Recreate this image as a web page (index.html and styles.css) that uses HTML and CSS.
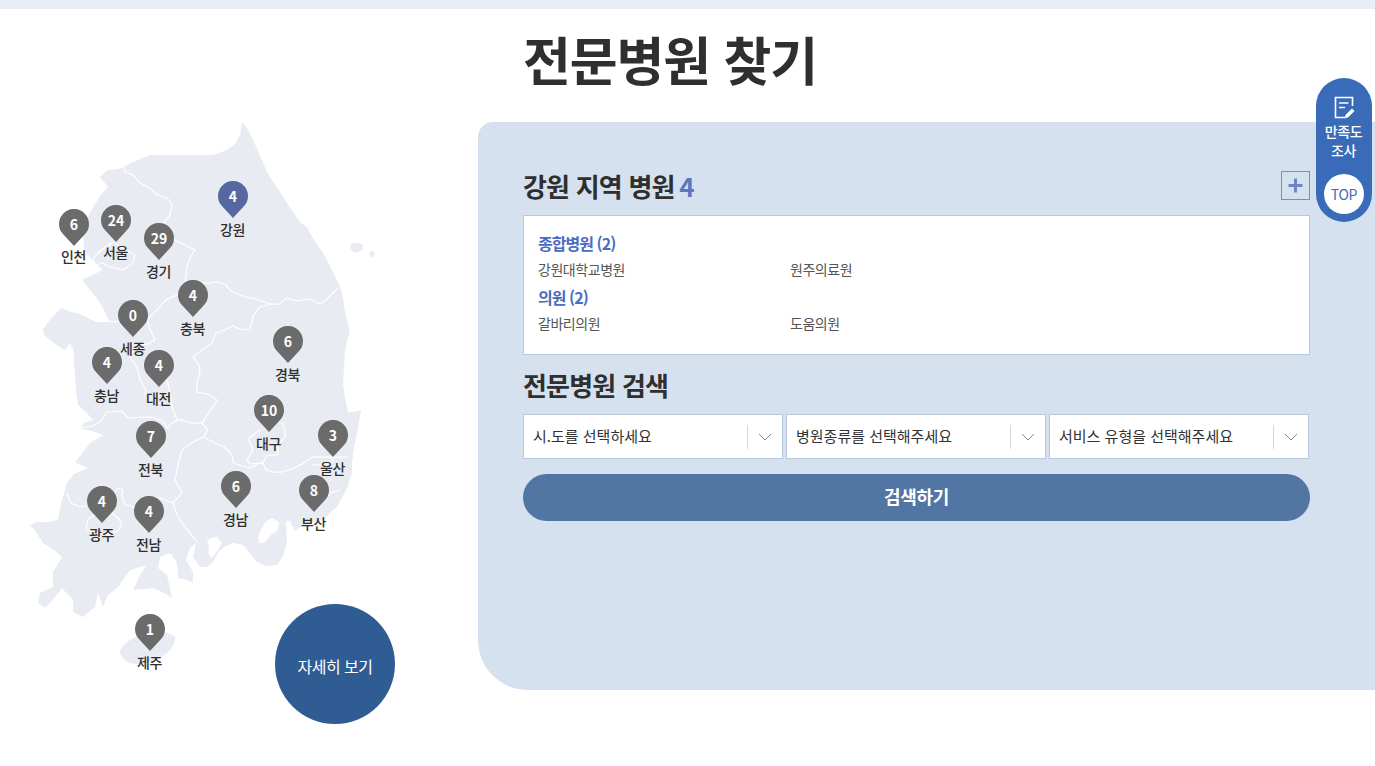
FILE: index.html
```html
<!DOCTYPE html>
<html lang="ko">
<head>
<meta charset="utf-8">
<title>전문병원 찾기</title>
<link rel="stylesheet" href="styles.css">
</head>
<body>
<div class="topbar"></div>
<header class="page-head"><h1 class="page-title">전문병원 찾기</h1></header>
<main class="content">
  <section class="map">
    <svg class="map-art" width="478" height="644" viewBox="0 122 478 644" aria-hidden="true">
      <path class="land" d="M242 122 L247 128 L253 140 L258 151 L262 160 L267 172 L276 186 L285 200 L293 212 L300 222 L307 227 L310 233 L316 243 L323 253 L330 266 L337 280 L340 287 L343 297 L345 312 L350 333 L347 340 L345 352 L344 368 L343 383 L345 398 L348 412 L354 412 L361 410 L358 428 L354 448 L352 462 L352 473 L347 488 L337 507 L331 512 L323 520 L312 522 L302 526 L295 531 L290 521 L286 521 L287 543 L283 556 L277 565 L266 566 L257 562 L250 553 L243 545 L233 543 L226 546 L220 550 L212 563 L207 567 L200 567 L193 557 L196 543 L190 548 L186 560 L193 572 L193 583 L188 580 L178 578 L177 563 L170 553 L160 557 L158 568 L167 575 L172 598 L164 593 L153 588 L133 590 L140 575 L147 565 L130 570 L118 587 L108 595 L103 607 L98 593 L95 607 L83 617 L73 612 L73 600 L62 588 L50 603 L45 608 L38 603 L40 593 L53 587 L53 572 L62 557 L54 550 L43 543 L36 532 L30 525 L37 522 L48 522 L58 520 L61 504 L67 483 L74 474 L88 468 L80 465 L75 462 L80 456 L90 443 L103 435 L95 432 L80 428 L84 423 L93 420 L86 412 L78 405 L76 390 L75 373 L73 352 L70 343 L65 350 L56 345 L44 335 L43 329 L50 320 L61 308 L68 311 L80 314 L96 322 L110 322 L104 310 L98 300 L90 290 L82 280 L90 276 L103 270 L94 262 L84 250 L83 227 L88 217 L93 207 L100 196 L108 187 L104 182 L100 177 L108 170 L118 169 L125 166 L138 160 L150 155 L170 155 L190 155 L213 155 L227 150 L235 144 L240 135 Z"/>
      <path class="land" d="M350 246 C352 242 360 242 363 245 C364 250 358 254 354 252 C351 251 350 248 350 246 Z"/>
      <ellipse class="land" cx="372" cy="254" rx="2.6" ry="3"/>
      <path class="land" d="M120 651 C122 643 133 638 143 634 C155 632 170 631 175 637 C176 645 168 654 158 659 C148 664 134 666 126 661 C122 658 120 655 120 651 Z"/>
      <path class="sea" d="M70 348 C73 345 74 351 74 358 C74 366 75 373 73 376 C71 370 69 358 70 348 Z"/>
      <path class="sea" d="M272 518 L266 521 L262 528 L258 537 L259 543 L264 543 L272 534 L278 530 L279 522 Z"/>
      <path class="sea" d="M207 541 L211 538 L217 537 L222 543 L218 550 L212 558 L208 553 L209 546 Z"/>
      <g class="borders">
        <path d="M123 165 L125 172 L133 175 L140 183 L150 188 L157 195 L168 199 L172 205 L170 215 L163 223 L168 233 L175 240 L185 245 L195 250 L190 258 L187 267 L185 283 L196 282 L203 283 L210 283 L217 282 L225 284 L231 291 L238 294 L245 297 L256 299 L270 304 L279 304 L287 298 L296 301 L310 299 L319 304 L325 301 L338 288"/>
        <path d="M185 283 L177 295 L167 299 L157 310 L147 320 L132 320 L110 322"/>
        <path d="M270 304 L260 307 L253 316 L250 330 L240 329 L233 326 L222 331 L216 333 L212 343 L205 348 L193 357 L199 365 L200 373 L197 382 L197 392 L208 394 L217 400 L211 409 L204 420 L202 423 L208 430 L203 437"/>
        <path d="M147 320 L149 327 L155 340 L148 344 L137 345 L130 357 L138 370 L140 380 L146 390 L145 395"/>
        <path d="M167 380 L170 393 L173 410 L177 420 L182 420 L192 423 L202 423"/>
        <path d="M177 420 L172 423 L167 428 L163 421 L152 417 L143 417 L128 418 L122 411 L107 412 L101 421 L93 426 L80 428"/>
        <path d="M203 437 L193 442 L182 450 L178 465 L175 480 L182 493 L173 503 L178 517 L186 528 L197 542"/>
        <path d="M173 503 L160 498 L150 497 L133 507 L124 503 L122 494 L123 490 L118 488 L113 495 L108 505 L92 505 L80 507 L71 503 L67 494"/>
        <path d="M112 513 L122 522 L119 530 L108 535 L91 531 L86 530 L88 519 L95 515"/>
        <path d="M203 437 L215 443 L224 447 L232 455 L233 463 L243 466 L250 468 L258 464 L263 463 L266 470 L273 472 L282 472 L292 469 L302 464 L313 457 L321 457 L330 457 L347 457"/>
        <path d="M313 465 L330 464 L335 456"/>
        <path d="M282 423 L285 431 L285 437 L278 445 L278 455 L267 455 L263 463"/>
        <path d="M263 463 L250 464 L247 460 L253 450 L249 441 L250 437 L260 430"/>
        <path d="M98 252 L113 242 L120 247 L135 255 L133 263 L123 270 L110 267 L103 263 L95 265 L93 258 L100 252"/>
        <path d="M327 496 L333 492 L340 490"/>
      </g>
    </svg>

    <div class="pin pin-incheon"><span class="pin-mark"><svg class="pin-shape" width="30" height="37" viewBox="0 0 30 37"><path d="M15 37 L4.4 25.6 A15 15 0 1 1 25.6 25.6 Z"/></svg><b class="pin-num">6</b></span><span class="pin-name">인천</span></div>
    <div class="pin pin-seoul"><span class="pin-mark"><svg class="pin-shape" width="30" height="37" viewBox="0 0 30 37"><path d="M15 37 L4.4 25.6 A15 15 0 1 1 25.6 25.6 Z"/></svg><b class="pin-num">24</b></span><span class="pin-name">서울</span></div>
    <div class="pin pin-gyeonggi"><span class="pin-mark"><svg class="pin-shape" width="30" height="37" viewBox="0 0 30 37"><path d="M15 37 L4.4 25.6 A15 15 0 1 1 25.6 25.6 Z"/></svg><b class="pin-num">29</b></span><span class="pin-name">경기</span></div>
    <div class="pin pin-gangwon is-active"><span class="pin-mark"><svg class="pin-shape" width="30" height="37" viewBox="0 0 30 37"><path d="M15 37 L4.4 25.6 A15 15 0 1 1 25.6 25.6 Z"/></svg><b class="pin-num">4</b></span><span class="pin-name">강원</span></div>
    <div class="pin pin-chungbuk"><span class="pin-mark"><svg class="pin-shape" width="30" height="37" viewBox="0 0 30 37"><path d="M15 37 L4.4 25.6 A15 15 0 1 1 25.6 25.6 Z"/></svg><b class="pin-num">4</b></span><span class="pin-name">충북</span></div>
    <div class="pin pin-sejong"><span class="pin-mark"><svg class="pin-shape" width="30" height="37" viewBox="0 0 30 37"><path d="M15 37 L4.4 25.6 A15 15 0 1 1 25.6 25.6 Z"/></svg><b class="pin-num">0</b></span><span class="pin-name">세종</span></div>
    <div class="pin pin-chungnam"><span class="pin-mark"><svg class="pin-shape" width="30" height="37" viewBox="0 0 30 37"><path d="M15 37 L4.4 25.6 A15 15 0 1 1 25.6 25.6 Z"/></svg><b class="pin-num">4</b></span><span class="pin-name">충남</span></div>
    <div class="pin pin-daejeon"><span class="pin-mark"><svg class="pin-shape" width="30" height="37" viewBox="0 0 30 37"><path d="M15 37 L4.4 25.6 A15 15 0 1 1 25.6 25.6 Z"/></svg><b class="pin-num">4</b></span><span class="pin-name">대전</span></div>
    <div class="pin pin-gyeongbuk"><span class="pin-mark"><svg class="pin-shape" width="30" height="37" viewBox="0 0 30 37"><path d="M15 37 L4.4 25.6 A15 15 0 1 1 25.6 25.6 Z"/></svg><b class="pin-num">6</b></span><span class="pin-name">경북</span></div>
    <div class="pin pin-daegu"><span class="pin-mark"><svg class="pin-shape" width="30" height="37" viewBox="0 0 30 37"><path d="M15 37 L4.4 25.6 A15 15 0 1 1 25.6 25.6 Z"/></svg><b class="pin-num">10</b></span><span class="pin-name">대구</span></div>
    <div class="pin pin-ulsan"><span class="pin-mark"><svg class="pin-shape" width="30" height="37" viewBox="0 0 30 37"><path d="M15 37 L4.4 25.6 A15 15 0 1 1 25.6 25.6 Z"/></svg><b class="pin-num">3</b></span><span class="pin-name">울산</span></div>
    <div class="pin pin-jeonbuk"><span class="pin-mark"><svg class="pin-shape" width="30" height="37" viewBox="0 0 30 37"><path d="M15 37 L4.4 25.6 A15 15 0 1 1 25.6 25.6 Z"/></svg><b class="pin-num">7</b></span><span class="pin-name">전북</span></div>
    <div class="pin pin-gyeongnam"><span class="pin-mark"><svg class="pin-shape" width="30" height="37" viewBox="0 0 30 37"><path d="M15 37 L4.4 25.6 A15 15 0 1 1 25.6 25.6 Z"/></svg><b class="pin-num">6</b></span><span class="pin-name">경남</span></div>
    <div class="pin pin-busan"><span class="pin-mark"><svg class="pin-shape" width="30" height="37" viewBox="0 0 30 37"><path d="M15 37 L4.4 25.6 A15 15 0 1 1 25.6 25.6 Z"/></svg><b class="pin-num">8</b></span><span class="pin-name">부산</span></div>
    <div class="pin pin-gwangju"><span class="pin-mark"><svg class="pin-shape" width="30" height="37" viewBox="0 0 30 37"><path d="M15 37 L4.4 25.6 A15 15 0 1 1 25.6 25.6 Z"/></svg><b class="pin-num">4</b></span><span class="pin-name">광주</span></div>
    <div class="pin pin-jeonnam"><span class="pin-mark"><svg class="pin-shape" width="30" height="37" viewBox="0 0 30 37"><path d="M15 37 L4.4 25.6 A15 15 0 1 1 25.6 25.6 Z"/></svg><b class="pin-num">4</b></span><span class="pin-name">전남</span></div>
    <div class="pin pin-jeju"><span class="pin-mark"><svg class="pin-shape" width="30" height="37" viewBox="0 0 30 37"><path d="M15 37 L4.4 25.6 A15 15 0 1 1 25.6 25.6 Z"/></svg><b class="pin-num">1</b></span><span class="pin-name">제주</span></div>

    <a class="more-link" href="#">자세히 보기</a>
  </section>

  <section class="panel">
    <div class="region-head">
      <h2 class="section-title">강원 지역 병원 <em class="count">4</em></h2>
      <button class="plus-btn" type="button" aria-label="더보기"><svg width="15" height="15" viewBox="0 0 15 15"><path d="M7.5 0.5 V14.5 M0.5 7.5 H14.5"/></svg></button>
    </div>
    <div class="result-box">
      <h3 class="group-title">종합병원 (2)</h3>
      <ul class="hospital-list"><li>강원대학교병원</li><li>원주의료원</li></ul>
      <h3 class="group-title">의원 (2)</h3>
      <ul class="hospital-list"><li>갈바리의원</li><li>도움의원</li></ul>
    </div>
    <h2 class="section-title search-title">전문병원 검색</h2>
    <div class="select-row">
      <div class="select-box"><span class="select-text">시.도를 선택하세요</span><span class="select-arrow"><svg width="14" height="8" viewBox="0 0 14 8"><path d="M1 1 L7 7 L13 1"/></svg></span></div>
      <div class="select-box"><span class="select-text">병원종류를 선택해주세요</span><span class="select-arrow"><svg width="14" height="8" viewBox="0 0 14 8"><path d="M1 1 L7 7 L13 1"/></svg></span></div>
      <div class="select-box"><span class="select-text">서비스 유형을 선택해주세요</span><span class="select-arrow"><svg width="14" height="8" viewBox="0 0 14 8"><path d="M1 1 L7 7 L13 1"/></svg></span></div>
    </div>
    <button class="search-btn" type="button">검색하기</button>
  </section>
</main>

<aside class="quick">
  <a class="quick-survey" href="#">
    <svg class="quick-icon" width="22" height="24" viewBox="0 0 22 24"><path class="qi-line" d="M13 21.5 H2.5 V1.5 H19.5 V10"/><path class="qi-line thin" d="M6 7 H15.5 M6 11.5 H12"/><path class="qi-pen" d="M12.5 19 L19 12.5 L21.5 15 L15 21.5 L12 22 Z"/></svg>
    <span class="quick-label">만족도<br>조사</span>
  </a>
  <a class="quick-top" href="#">TOP</a>
</aside>
</body>
</html>
```

FILE: styles.css
```css
* { box-sizing: border-box; }
html, body { margin: 0; padding: 0; }
body {
  position: relative;
  height: 766px;
  overflow: hidden;
  background: #fff;
  color: #2f2f2f;
  font-family: "Noto Sans CJK KR", "Noto Sans", sans-serif;
}
.topbar { height: 9px; background: #e8eef8; }
.page-head { height: 113px; padding: 15px 0 0 523px; }
.page-title {
  margin: 0;
  font-size: 52px;
  line-height: 70px;
  font-weight: 700;
  letter-spacing: -1.1px;
  color: #2f2f2f;
}
.content { display: flex; align-items: flex-start; }

.map { position: relative; flex: 0 0 478px; height: 644px; }
.map-art { display: block; }
.land { fill: #e8ebf2; }
.sea { fill: #fff; }
.borders path { fill: none; stroke: #fff; stroke-width: 1.25; stroke-linejoin: round; stroke-linecap: round; }

.pin { position: absolute; width: 60px; display: flex; flex-direction: column; align-items: center; }
.pin-mark { position: relative; display: block; width: 30px; height: 37px; }
.pin-shape { display: block; }
.pin-shape path { fill: #6b6b6b; }
.is-active .pin-shape path { fill: #56689f; }
.pin-num {
  position: absolute; left: 0; right: 0; top: 5px;
  text-align: center; color: #fff;
  font-size: 14px; line-height: 20px; font-weight: 700;
}
.pin-name { margin-top: 1px; padding-right: 1px; font-size: 14px; line-height: 21px; font-weight: 500; letter-spacing: -0.4px; color: #2f2f2f; white-space: nowrap; }
.pin-incheon .pin-name, .pin-seoul .pin-name { margin-top: 0; }

.pin-incheon { left: 44px; top: 87px; }
.pin-seoul { left: 86px; top: 83px; }
.pin-gyeonggi { left: 129px; top: 101px; }
.pin-gangwon { left: 203px; top: 59px; }
.pin-chungbuk { left: 163px; top: 158px; }
.pin-sejong { left: 103px; top: 178px; }
.pin-chungnam { left: 77px; top: 225px; }
.pin-daejeon { left: 129px; top: 228px; }
.pin-gyeongbuk { left: 258px; top: 204px; }
.pin-daegu { left: 239px; top: 273px; }
.pin-ulsan { left: 303px; top: 298px; }
.pin-jeonbuk { left: 121px; top: 299px; }
.pin-gyeongnam { left: 206px; top: 349px; }
.pin-busan { left: 284px; top: 353px; }
.pin-gwangju { left: 72px; top: 364px; }
.pin-jeonnam { left: 119px; top: 374px; }
.pin-jeju { left: 120px; top: 492px; }

.more-link {
  position: absolute; left: 275px; top: 482px;
  width: 120px; height: 120px; border-radius: 50%;
  display: flex; align-items: center; justify-content: center;
  padding-top: 4px;
  background: #305c94; color: #fff;
  font-size: 16px; text-decoration: none; letter-spacing: -0.55px;
}

.panel {
  flex: 1 1 auto;
  height: 568px;
  padding: 43px 65px 0 45px;
  background: #d6e1ef;
  border-radius: 15px 0 0 50px;
}
.region-head { display: flex; justify-content: space-between; align-items: flex-start; height: 44px; margin-top: 6px; }
.section-title { margin: 0; font-size: 26px; line-height: 30px; font-weight: 700; letter-spacing: -0.8px; color: #2f2f2f; }
.count { font-style: normal; color: #5a78c0; margin-left: -2px; }
.plus-btn {
  width: 29px; height: 29px; padding: 0;
  display: flex; align-items: center; justify-content: center;
  background: transparent; border: 1px solid #7a8cc4;
}
.plus-btn path { fill: none; stroke: #6c86c6; stroke-width: 3; }

.result-box {
  height: 140px;
  padding: 14px 14px 0;
  background: #fff;
  border: 1px solid #b8c8dc;
}
.group-title { margin: 0; font-size: 16px; line-height: 26px; font-weight: 700; letter-spacing: -0.95px; color: #4a6cc0; }
.hospital-list {
  list-style: none; margin: 0 0 2px; padding: 0;
  display: grid; grid-template-columns: 252px 1fr;
  font-size: 14px; line-height: 26px; letter-spacing: -0.45px; color: #555;
}
.search-title { margin-top: 15px; }

.select-row { display: flex; gap: 3px; margin-top: 14px; }
.select-box {
  flex: 0 0 260px; height: 45px;
  display: flex; align-items: center; justify-content: space-between;
  padding-left: 9px;
  background: #fff;
  border: 1px solid #b8c8dc;
}
.select-text { padding-bottom: 2px; font-size: 15px; color: #333; letter-spacing: 0; white-space: nowrap; }
.select-arrow {
  width: 35px; height: 24px;
  display: flex; align-items: center; justify-content: center;
  padding-right: 1px;
  border-left: 1px solid #d8d8d8;
}
.select-arrow path { fill: none; stroke: #888; stroke-width: 1; }

.search-btn {
  display: block; width: 787px; height: 47px; margin-top: 15px; padding: 0 0 3px;
  border: 0; border-radius: 24px;
  background: #5276a4; color: #fff;
  font-family: inherit; font-size: 18px; font-weight: 700; letter-spacing: -0.35px;
}

.quick {
  position: absolute; left: 1316px; top: 78px;
  width: 56px; height: 144px; border-radius: 28px;
  background: #3a6bb8;
  display: flex; flex-direction: column; align-items: center;
  padding-top: 18px;
}
.quick-survey { display: flex; flex-direction: column; align-items: center; color: #fff; text-decoration: none; }
.quick-icon { display: block; }
.qi-line { fill: none; stroke: #fff; stroke-width: 1.6; }
.qi-line.thin { stroke-width: 1.4; }
.qi-pen { fill: #fff; }
.quick-label { margin-top: 2px; padding-right: 1px; font-size: 14px; line-height: 19px; font-weight: 500; text-align: center; letter-spacing: -0.3px; }
.quick-top {
  position: absolute; left: 8px; top: 96px;
  width: 40px; height: 40px; border-radius: 50%;
  display: flex; align-items: center; justify-content: center;
  background: #fff; color: #3a6bb8;
  font-size: 14px; text-decoration: none; letter-spacing: -0.3px;
}
```
